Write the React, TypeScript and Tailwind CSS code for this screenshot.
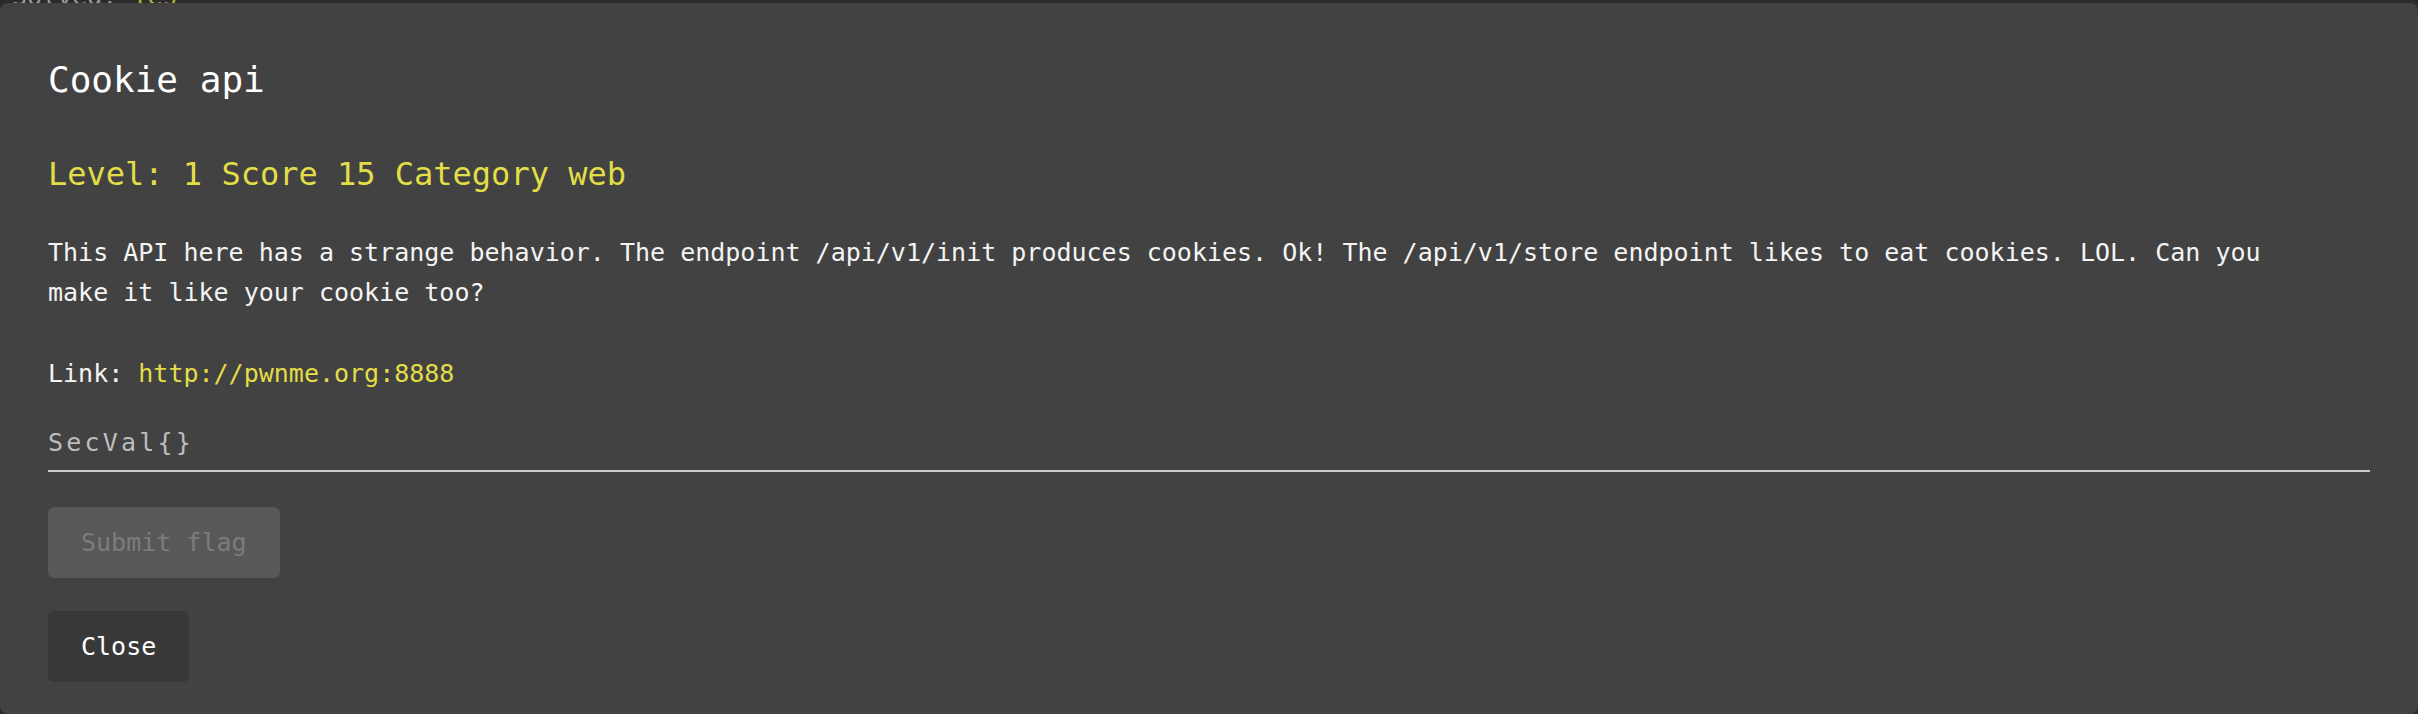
import React from "react";

const mono = { fontFamily: '"DejaVu Sans Mono", "Liberation Mono", monospace' };

export default function App() {
  return (
    <div
      className="w-[2418px] h-[714px] overflow-hidden bg-[#2b2b2b] flex flex-col font-['DejaVu_Sans_Mono',monospace]"
      style={mono}
    >
      <div className="h-[3px] overflow-hidden flex items-end pl-[12px]">
        <div className="text-[25px] leading-[26px] -mb-[7px] whitespace-pre">
          <span className="text-[#9a9a9a]">Solved: </span>
          <span className="text-[#b5b23a]">Yes</span>
        </div>
      </div>
      <div className="flex-1 bg-[#424242] rounded-[8px] px-[48px] pt-[57px] flex flex-col items-start">
        <h2 className="text-[36px] leading-[40px] text-white">Cookie api</h2>
        <h3 className="mt-[54px] text-[32px] leading-[40px] text-[#e3dd47]">
          Level: 1 Score 15 Category web
        </h3>
        <p className="mt-[39px] max-w-[2240px] text-[25px] leading-[39.5px] text-[#f4f4f4]">
          This API here has a strange behavior. The endpoint /api/v1/init produces cookies. Ok! The
          /api/v1/store endpoint likes to eat cookies. LOL. Can you make it like your cookie too?
        </p>
        <p className="mt-[42px] text-[25px] leading-[39.5px] text-[#f4f4f4]">
          Link: <span className="text-[#e3dd47]">http://pwnme.org:8888</span>
        </p>
        <input
          className="mt-[34px] w-full h-[44px] pt-0 pb-[12px] px-0 bg-transparent border-0 border-b-2 border-[#c9c9c9] text-[25px] tracking-[3.2px] text-[#d0d0d0] placeholder:text-[#bdbdbd] outline-none font-['DejaVu_Sans_Mono',monospace]"
          placeholder="SecVal{}"
          style={mono}
        />
        <button
          disabled
          className="mt-[35px] h-[71px] px-[33px] rounded-[6px] bg-[#585858] text-[#7c7c7c] text-[25px] leading-[29px]"
          style={mono}
        >
          Submit flag
        </button>
        <button
          className="mt-[33px] h-[71px] px-[33px] rounded-[6px] bg-[#383838] text-white text-[25px] leading-[29px]"
          style={mono}
        >
          Close
        </button>
      </div>
    </div>
  );
}
